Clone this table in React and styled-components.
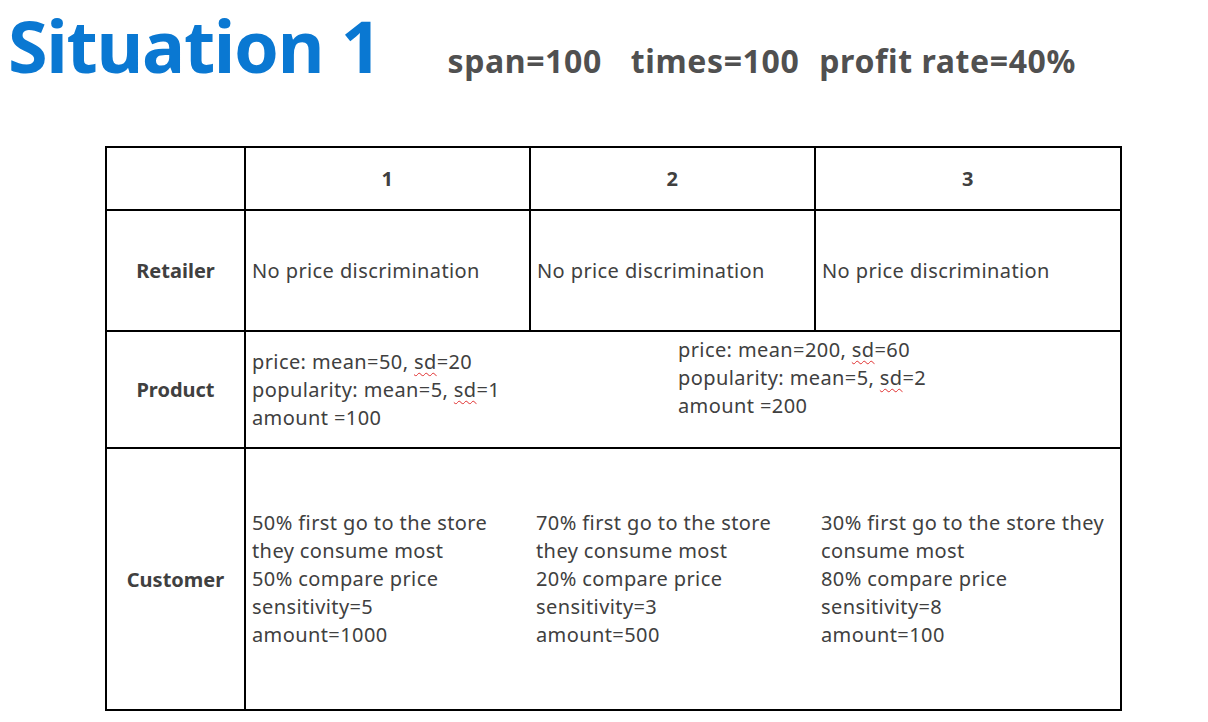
import styled, { createGlobalStyle } from "styled-components";

const GlobalStyle = createGlobalStyle`
    body {
        margin: 0;
        background: #ffffff;
        font-family: "Noto Sans", "Open Sans", sans-serif;
    }
`;

const columns = [
    {
        retailer: "No price discrimination",
        customer: [
            "50% first go to the store",
            "they consume most",
            "50% compare price",
            "sensitivity=5",
            "amount=1000",
        ],
    },
    {
        retailer: "No price discrimination",
        customer: [
            "70% first go to the store",
            "they consume most",
            "20% compare price",
            "sensitivity=3",
            "amount=500",
        ],
    },
    {
        retailer: "No price discrimination",
        customer: [
            "30% first go to the store they",
            "consume most",
            "80% compare price",
            "sensitivity=8",
            "amount=100",
        ],
    },
];

const Sd = () => <Squiggle>sd</Squiggle>;

const App = () => {
    return (
        <Slide>
            <GlobalStyle />
            <Header>
                <Title>Situation 1</Title>
                <Params>
                    <Param>span=100</Param>
                    <Param $gap={29}>times=100</Param>
                    <Param $gap={20}>profit rate=40%</Param>
                </Params>
            </Header>

            <Table>
                <colgroup>
                    <col style={{ width: 139 }} />
                    <col style={{ width: 285 }} />
                    <col style={{ width: 285 }} />
                    <col style={{ width: 306 }} />
                </colgroup>
                <tbody>
                    <Row $height={63}>
                        <Cell />
                        {columns.map((c, i) => (
                            <HeadCell key={i}>{i + 1}</HeadCell>
                        ))}
                    </Row>
                    <Row $height={121}>
                        <LabelCell>Retailer</LabelCell>
                        {columns.map((c, i) => (
                            <Cell key={i}>{c.retailer}</Cell>
                        ))}
                    </Row>
                    <Row $height={117}>
                        <LabelCell>Product</LabelCell>
                        <Cell $open="right">
                            <Lines>
                                <div>price: mean=50, <Sd />=20</div>
                                <div>popularity: mean=5, <Sd />=1</div>
                                <div>amount =100</div>
                            </Lines>
                        </Cell>
                        <Cell colSpan={2} $open="left" $top>
                            <Lines $indent={142}>
                                <div>price: mean=200, <Sd />=60</div>
                                <div>popularity: mean=5, <Sd />=2</div>
                                <div>amount =200</div>
                            </Lines>
                        </Cell>
                    </Row>
                    <Row $height={262}>
                        <LabelCell>Customer</LabelCell>
                        {columns.map((c, i) => (
                            <Cell key={i} $open={i === 0 ? "right" : i === 2 ? "left" : "both"}>
                                <Lines>
                                    {c.customer.map((line) => (
                                        <div key={line}>{line}</div>
                                    ))}
                                </Lines>
                            </Cell>
                        ))}
                    </Row>
                </tbody>
            </Table>
        </Slide>
    );
};

export default App;

const Slide = styled.div`
    width: 1208px;
    height: 722px;
    overflow: hidden;
    background: #ffffff;
`;

const Header = styled.div`
    display: flex;
    align-items: baseline;
    margin-top: -4px;
    padding: 0 0 0 8px;
    height: 150px;
    box-sizing: border-box;
`;

const Title = styled.h1`
    margin: 0;
    padding: 0 6px 0 0;
    font-size: 72px;
    font-weight: 700;
    color: #0a78d2;
    letter-spacing: -1.3px;
    line-height: 98px;
    white-space: nowrap;
`;

const Params = styled.div`
    display: flex;
    margin-left: 61px;
`;

const Param = styled.span`
    margin-left: ${(p) => p.$gap || 0}px;
    font-size: 32px;
    font-weight: 700;
    letter-spacing: 0.6px;
    color: #505050;
    white-space: nowrap;
`;

const Table = styled.table`
    margin-left: 105px;
    width: 1015px;
    border-collapse: collapse;
    table-layout: fixed;
    border: 2px solid #000;
    color: #404040;
    font-size: 20px;
    letter-spacing: 0.4px;
`;

const Row = styled.tr`
    height: ${(p) => p.$height}px;
`;

const Cell = styled.td`
    border: 2px solid #000;
    border-left: ${(p) => (p.$open === "left" || p.$open === "both" ? "none" : "2px solid #000")};
    border-right: ${(p) => (p.$open === "right" || p.$open === "both" ? "none" : "2px solid #000")};
    padding: ${(p) => (p.$top ? "4px 6px 0 6px" : "0 6px")};
    vertical-align: ${(p) => (p.$top ? "top" : "middle")};
    text-align: left;
`;

const HeadCell = styled(Cell)`
    text-align: center;
    font-weight: 700;
`;

const LabelCell = styled(Cell)`
    text-align: center;
    font-weight: 700;
    letter-spacing: 0;
`;

const Lines = styled.div`
    padding-left: ${(p) => p.$indent || 0}px;
    line-height: 28px;
    white-space: nowrap;
`;

const Squiggle = styled.span`
    text-decoration: underline wavy #e03030;
    text-decoration-thickness: 1px;
    text-underline-offset: 3px;
`;
